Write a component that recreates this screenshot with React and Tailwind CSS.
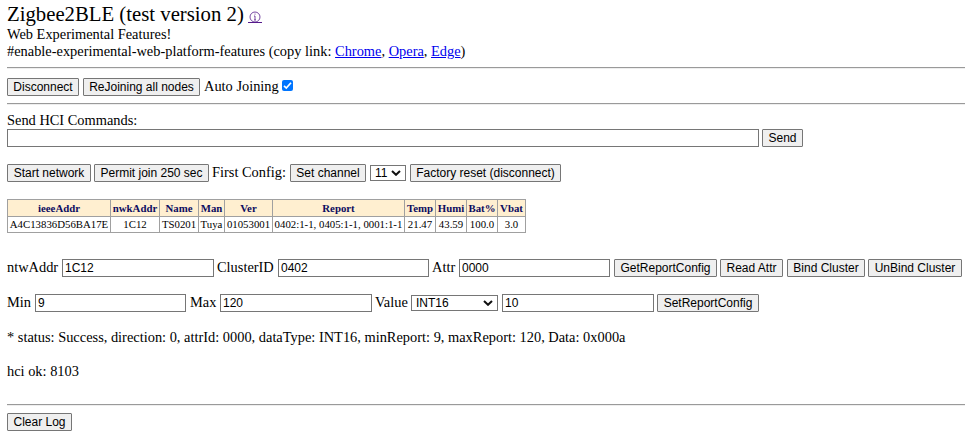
import React from 'react';

const serif = 'font-["Liberation_Serif","Times_New_Roman",serif]';
const sans = 'font-["Liberation_Sans",Arial,sans-serif]';

function Btn({ className, children }) {
  return (
    <button className={`${sans} h-[18px] shrink-0 whitespace-nowrap rounded-[1px] border border-[#767676] bg-[#efefef] text-center text-[12px] leading-[16px] text-black ${className}`}>
      {children}
    </button>
  );
}

function Field({ className, value }) {
  return (
    <input
      type="text"
      defaultValue={value}
      className={`${sans} h-[18px] shrink-0 border border-[#767676] bg-white px-[2px] text-[12px] leading-[16px] text-black ${className}`}
    />
  );
}

function Picker({ className, value }) {
  return (
    <div className={`${sans} flex h-4 shrink-0 items-center justify-between border border-[#767676] bg-white pl-1 pr-[4px] text-[12px] leading-[14px] text-black ${className}`}>
      <span>{value}</span>
      <svg width="10" height="6" viewBox="0 0 10 6" fill="none" stroke="#101010" strokeWidth="2">
        <path d="M1 1l4 3.8L9 1" />
      </svg>
    </div>
  );
}

function Label({ className, children }) {
  return <span className={`shrink-0 whitespace-nowrap leading-[17px] ${className}`}>{children}</span>;
}

function Rule() {
  return <div className="h-[2px] shrink-0 border-b border-t border-b-[#eeeeee] border-t-[#9a9a9a]" />;
}

function Row({ className, children }) {
  return <div className={`flex h-[18px] shrink-0 items-center ${className}`}>{children}</div>;
}

const columns = [
  ['ieeeAddr', 'A4C13836D56BA17E', 'w-[103px]'],
  ['nwkAddr', '1C12', 'w-[49px]'],
  ['Name', 'TS0201', 'w-[39px]'],
  ['Man', 'Tuya', 'w-[26px]'],
  ['Ver', '01053001', 'w-[48px]'],
  ['Report', '0402:1-1, 0405:1-1, 0001:1-1', 'w-[132px]'],
  ['Temp', '21.47', 'w-[31px]'],
  ['Humi', '43.59', 'w-[31px]'],
  ['Bat%', '100.0', 'w-[31px]'],
  ['Vbat', '3.0', 'w-[28px]'],
];

function NodeTable() {
  return (
    <table className="mt-[17px] w-[519px] table-fixed border-separate border-spacing-0 border-l border-t border-[#a0a0a0] text-[10.8px] leading-[15px]">
      <colgroup>
        {columns.map(([name, , width]) => <col key={name} className={width} />)}
      </colgroup>
      <thead>
        <tr className="h-[17px] bg-[#ffefd0] text-[#0c0c60]">
          {columns.map(([name]) => (
            <th key={name} className="whitespace-nowrap border-b border-r border-[#a0a0a0] p-0 text-center font-bold">{name}</th>
          ))}
        </tr>
      </thead>
      <tbody>
        <tr className="h-4">
          {columns.map(([name, value]) => (
            <td key={name} className="whitespace-nowrap border-b border-r border-[#a0a0a0] p-0 text-center">{value}</td>
          ))}
        </tr>
      </tbody>
    </table>
  );
}

export default function App() {
  return (
    <div className={`${serif} flex h-[433px] w-[965px] flex-col overflow-hidden bg-white pl-[7px] text-[14.4px] text-black`}>
      <div className="mt-[3px] flex h-[23px] whitespace-nowrap leading-[23px]">
        <span className="w-[241px] text-[20.75px]">Zigbee2BLE (test version 2)</span>
        <a className="mt-[8px] flex h-[12px] w-[14px] justify-center border-b border-[#551a8b]">
          <svg width="12" height="12" viewBox="0 0 12 12" fill="none" stroke="#551a8b" strokeWidth="0.8">
            <circle cx="6" cy="6" r="5" />
            <path d="M6 5v4M5 5h1M5 9h2M6 2.6v1" />
          </svg>
        </a>
      </div>
      <Label className="block h-[17px]">Web Experimental Features!</Label>
      <Label className="block h-[17px]">
        #enable-experimental-web-platform-features (copy link:{' '}
        <a className="text-[#0000ee] underline">Chrome</a>,{' '}
        <a className="text-[#0000ee] underline">Opera</a>,{' '}
        <a className="text-[#0000ee] underline">Edge</a>)
      </Label>
      <div className="h-[7px] shrink-0" />
      <Rule />
      <Row className="mt-[9px]">
        <Btn className="w-[72px]">Disconnect</Btn>
        <Btn className="ml-1 w-[117px]">ReJoining all nodes</Btn>
        <Label className="mb-[2px] ml-[4px] w-[78px]">Auto Joining</Label>
        <span className="mb-[3px] flex h-[11px] w-[11px] items-center justify-center rounded-[2px] bg-[#0075ff]">
          <svg width="9" height="9" viewBox="0 0 9 9" fill="none" stroke="white" strokeWidth="1.7">
            <path d="M1 4.8l2.3 2.2L8 1.8" />
          </svg>
        </span>
      </Row>
      <div className="h-[7px] shrink-0" />
      <Rule />
      <Label className="mt-[7px] block h-[17px]">Send HCI Commands:</Label>
      <Row>
        <Field className="w-[752px]" value="" />
        <Btn className="ml-[3px] w-[41px]">Send</Btn>
      </Row>
      <Row className="mt-[17px]">
        <Btn className="w-[84px]">Start network</Btn>
        <Btn className="ml-[3px] w-[115px]">Permit join 250 sec</Btn>
        <Label className="mb-[2px] ml-[3px] w-[78px]">First Config:</Label>
        <Btn className="w-[76px]">Set channel</Btn>
        <Picker className="ml-1 w-[36px]" value="11" />
        <Btn className="ml-1 w-[151px]">Factory reset (disconnect)</Btn>
      </Row>
      <NodeTable />
      <Row className="mt-[26px]">
        <Label className="mb-[2px] w-[55px]">ntwAddr</Label>
        <Field className="w-[152px]" value="1C12" />
        <Label className="mb-[2px] ml-[3px] w-[61px]">ClusterID</Label>
        <Field className="w-[151px]" value="0402" />
        <Label className="mb-[2px] ml-[3px] w-[27px]">Attr</Label>
        <Field className="w-[151px]" value="0000" />
        <Btn className="ml-1 w-[103px]">GetReportConfig</Btn>
        <Btn className="ml-[3px] w-[63px]">Read Attr</Btn>
        <Btn className="ml-1 w-[78px]">Bind Cluster</Btn>
        <Btn className="ml-[3px] w-[94px]">UnBind Cluster</Btn>
      </Row>
      <Row className="mt-[17px]">
        <Label className="mb-[2px] w-[28px]">Min</Label>
        <Field className="w-[151px]" value="9" />
        <Label className="mb-[2px] ml-[4px] w-[30px]">Max</Label>
        <Field className="w-[152px]" value="120" />
        <Label className="mb-[2px] ml-[3px] w-[36px]">Value</Label>
        <Picker className="w-[87px]" value="INT16" />
        <Field className="ml-1 w-[152px]" value="10" />
        <Btn className="ml-[3px] w-[102px]">SetReportConfig</Btn>
      </Row>
      <Label className="mt-[17px] block h-[17px]">
        * status: Success, direction: 0, attrId: 0000, dataType: INT16, minReport: 9, maxReport: 120, Data: 0x000a
      </Label>
      <Label className="mt-[17px] block h-[17px]">hci ok: 8103</Label>
      <div className="h-[24px] shrink-0" />
      <Rule />
      <Row className="mt-[7px]">
        <Btn className="w-[65px]">Clear Log</Btn>
      </Row>
    </div>
  );
}
